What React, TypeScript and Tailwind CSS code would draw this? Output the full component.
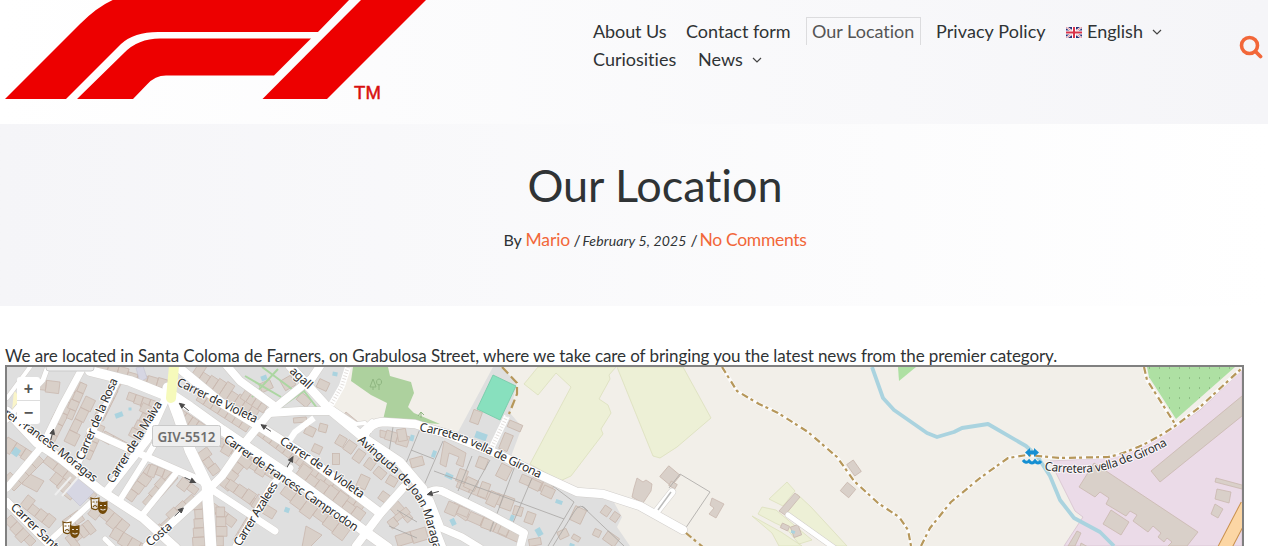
import React from "react";

type Pt = [number, number];

const ROADS: [string, number][] = [
  ["M7 411 L37 443 L60 458 L100 490 L143 518 L176 548", 9],
  ["M90 371 L130 381 L170 397", 10],
  ["M82 369 L62 406 L43 445 L7 488", 7],
  ["M47 369 L43 380 L22 402 L7 420", 5],
  ["M30 367 L7 398", 4],
  ["M118 380 L96 425 L77 466", 6],
  ["M165 400 L147 440 L107 491", 8],
  ["M90 431 L147 457 L204 482", 7],
  ["M157 440 L147 457 L120 500", 6],
  ["M177 472 L143 514", 6],
  ["M168 388 L178 415 L190 450 L207 485 L211 548", 11],
  ["M172 395 L190 407 L222 430 L290 476 L367 533 L388 548", 10],
  ["M178 367 L220 402 L257 425 L300 452 L380 513", 9],
  ["M320 366 L312 378 L271 411 L247 440 L222 476 L208 490 L147 546", 8],
  ["M227 366 L240 381 L273 405", 8],
  ["M269 413 L300 411 L332 411", 8],
  ["M290 366 L330 410 L364 438 L400 462 L423 489 L431 520 L442 548", 9],
  ["M364 436 Q370 422 384 422 L415 424 L450 435 L500 455 L540 475 L577 492 L603 494 L640 506 L683 530", 8.5],
  ["M332 408 L356 424 L365 423", 4],
  ["M404 487 L380 514 L356 546", 8],
  ["M426 494 Q436 487 446 493 L487 513 L524 533 L520 548", 8],
  ["M430 500 L441 528 L462 537 L480 548", 7],
  ["M290 468 L273 484 L236 546", 7],
  ["M208 487 L275 531", 7],
  ["M7 502 L35 530 L52 547", 8],
  ["M91 503 L53 538", 6],
  ["M105 539 L115 549", 5],
  ["M370 431 L372 421 L360 432", 4],
  ["M657 511 L672 492", 7],
  ["M788 515 L840 552", 5],
];

const ROWS: [number, number, number, number, number, number][] = [
  [8, 437, 35, 454, 3, 14], [43, 462, 92, 501, 5, -10], [20, 377, 60, 382, 3, 15],
  [52, 447, 84, 384, 6, -13], [64, 441, 86, 396, 4, 12], [87, 385, 72, 420, 4, 9],
  [103, 421, 121, 384, 5, -10], [90, 460, 105, 427, 4, -14], [105, 431, 140, 450, 4, 10],
  [129, 392, 158, 402, 4, 10], [154, 408, 138, 440, 4, 12], [97, 369, 166, 389, 7, -9],
  [118, 391, 103, 421, 4, 8], [125, 497, 149, 464, 4, 11], [151, 464, 172, 472, 3, 12],
  [150, 509, 178, 478, 4, -13], [183, 477, 199, 489, 2, 11], [181, 409, 205, 425, 4, 13],
  [190, 377, 254, 419, 9, -17], [196, 400, 246, 432, 7, -13], [197, 454, 213, 476, 3, -12],
  [213, 434, 239, 447, 4, 9], [226, 442, 277, 473, 6, 11], [240, 398, 263, 413, 4, -12],
  [256, 434, 302, 468, 7, -12], [304, 461, 365, 505, 8, 12], [296, 474, 360, 521, 7, -13],
  [287, 484, 350, 530, 6, 15], [243, 454, 219, 484, 4, -13], [225, 487, 258, 510, 4, -12],
  [211, 501, 237, 520, 3, 12], [216, 507, 216, 546, 4, -11], [202, 500, 205, 546, 5, 12],
  [198, 501, 158, 538, 5, 12], [14, 491, 44, 461, 4, -16], [56, 472, 86, 496, 4, 13],
  [20, 505, 49, 528, 4, -13], [11, 515, 36, 541, 4, 12], [99, 500, 130, 525, 4, 18],
  [115, 527, 150, 548, 4, 14], [65, 538, 88, 520, 4, 15], [78, 510, 62, 521, 2, -15],
  [251, 506, 272, 519, 2, -14], [247, 517, 233, 540, 3, -9], [346, 412, 358, 422, 1, 7],
  [387, 430, 410, 437, 2, 12], [456, 487, 506, 508, 4, -12],
  [467, 520, 519, 543, 4, -12], [449, 501, 470, 510, 2, 12], [519, 482, 550, 495, 3, -11],
  [397, 500, 413, 518, 2, 11], [395, 536, 425, 527, 2, 14], [387, 522, 406, 507, 3, 9],
];

function parcels([x1, y1, x2, y2, n, depth]: [number, number, number, number, number, number], k: number): string {
  const dx = (x2 - x1) / n;
  const dy = (y2 - y1) / n;
  const len = Math.hypot(dx, dy);
  const nx = -dy / len;
  const ny = dx / len;
  let d = "";
  for (let i = 0; i < n; i++) {
    const h = depth * (1 - ((i * 3 + k * 2) % 4) * 0.11);
    const a: Pt = [x1 + dx * i, y1 + dy * i];
    const b: Pt = [a[0] + dx, a[1] + dy];
    d += `M${a[0]} ${a[1]}L${b[0]} ${b[1]}L${b[0] + nx * h} ${b[1] + ny * h}L${a[0] + nx * h} ${a[1] + ny * h}Z`;
  }
  return d;
}

// x, y, width, height, rotation of free-standing houses
const HOUSES: [number, number, number, number, number][] = [
  [323, 385, 11, 9, 25], [304, 400, 13, 9, 40], [288, 383, 12, 11, -30], [266, 386, 12, 9, -25],
  [310, 431, 10, 9, 25], [323, 428, 8, 8, 15], [300, 420, 13, 5, -5], [341, 441, 9, 10, 30],
  [317, 449, 9, 8, 25], [336, 459, 7, 11, 0], [350, 447, 10, 11, 35], [359, 456, 9, 12, 35],
  [370, 464, 9, 10, 35], [380, 473, 11, 9, 40], [392, 481, 10, 9, 30], [363, 482, 10, 13, 25],
  [384, 497, 9, 9, 35], [402, 435, 9, 12, -10], [417, 462, 13, 9, -15], [476, 417, 9, 13, 20],
  [515, 426, 14, 7, 23], [506, 442, 9, 17, 22], [504, 472, 12, 14, 27], [482, 463, 10, 11, 20],
  [462, 476, 9, 13, 20], [471, 484, 12, 11, 25], [484, 490, 9, 15, 20], [493, 499, 10, 14, 25],
  [507, 503, 12, 13, 20], [518, 511, 9, 9, 15], [530, 518, 9, 11, 20], [578, 515, 12, 15, 25],
  [535, 485, 11, 9, 25], [548, 492, 12, 10, 25],
  [606, 511, 8, 9, 35], [615, 517, 7, 9, 35], [597, 533, 7, 7, 25], [611, 539, 14, 10, 35],
  [563, 534, 10, 8, -25], [576, 538, 8, 5, 30], [670, 476, 15, 14, 40], [673, 485, 7, 5, 30],
  [854, 468, 8, 14, -35], [848, 490, 11, 11, 40], [785, 527, 8, 5, 25], [796, 531, 8, 11, -20],
  [535, 542, 12, 7, -10], [504, 530, 9, 10, 25], [487, 524, 10, 10, 20],
];

const POOLS: [number, number, number, number, number][] = [
  [119, 415, 8, 5, -20], [130, 409, 3, 3, 0], [16, 452, 7, 8, 35], [264, 378, 6, 5, -20],
  [335, 374, 5, 4, 10], [287, 510, 5, 5, 20], [412, 438, 4, 6, 15], [434, 454, 4, 7, 20],
  [449, 476, 8, 5, 25], [481, 436, 12, 7, 20], [453, 522, 5, 7, -25], [512, 518, 4, 6, 20],
  [539, 532, 6, 8, -30], [559, 502, 7, 4, 20], [572, 545, 5, 3, 20], [793, 532, 4, 3, 20],
];

const ARROWS: [number, number, number][] = [
  [52, 435, -76], [184, 407, 218], [190, 480, 25], [179, 512, -43],
  [266, 428, 214], [290, 462, -60], [433, 493, 165],
];

const LABELS: [string, string, number][] = [
  ["r1", "rer Francesc Moragas", 113], ["r2", "Carrer de la Rosa", 88], ["r3", "Carrer de la Malva", 94],
  ["r4", "Carrer de Violeta", 88], ["r5", "Carrer de la Violeta", 99], ["r6", "Carrer de Francesc Camprodon", 160],
  ["r7", "Carrer Azalees", 73], ["r8", "Avinguda de Joan Maragall", 143], ["r9", "Carretera vella de Girona", 130],
  ["r10", "Carretera vella de Girona", 129], ["r11", "Costa", 30], ["r12", "Carrer Sant", 61], ["r13", "agall", 26],
];

function rects(items: [number, number, number, number, number][]) {
  return items.map(([x, y, w, h, a], i) => (
    <rect key={i} x={x - w / 2} y={y - h / 2} width={w} height={h} transform={`rotate(${a} ${x} ${y})`} />
  ));
}

function Masks({ x, y }: { x: number; y: number }) {
  return (
    <g transform={`translate(${x} ${y})`}>
      <path d="M1 1 Q4 2.5 9 1 L8 11.500 Q5 14 1.5 11 Z" fill="#fff" fillOpacity=".3" stroke="#734a08" strokeWidth="1.1" />
      <path d="M2.5 5 h2 M6 5 h1.500 M3 10 Q5 7 7 10" stroke="#734a08" strokeWidth="1.1" fill="none" />
      <path d="M8 4 Q12 6 17.5 4 L17.5 12 Q16 17 12.5 17 Q8 16 8 11 Z" fill="#734a08" />
      <path d="M10 8.500 h2 M14 8.500 h2 M10.500 12 Q13 14 15.500 12" stroke="#e5dcd2" strokeWidth="1.2" fill="none" />
    </g>
  );
}

function StreetMap() {
  return (
    <svg className="block h-full w-full" viewBox="7 367 1235 179" preserveAspectRatio="none">
      <defs>
        <pattern id="dots" width="10" height="10" x="1144" y="363" patternUnits="userSpaceOnUse">
          <rect width="10" height="10" fill="#aee0a3" />
          <path d="M5 5 h1" stroke="#6c9c67" strokeWidth="1.2" />
        </pattern>
        <path id="r1" d="M3 415 L28 432 L55 452 L100 488" />
        <path id="r2" d="M83 461 L100 422 L121 373" />
        <path id="r3" d="M113 484 L137 446 L165 400" />
        <path id="r4" d="M176 385 L207 400 L259 425" />
        <path id="r5" d="M279 443 L310 463 L366 502" />
        <path id="r6" d="M223 441 L260 467 L361 536" />
        <path id="r7" d="M240 547 L258 518 L281 480" />
        <path id="r8" d="M357 441 L385 466 Q414 489 424 514 L437 560" />
        <path id="r9" d="M419 431 Q455 437 480 450 L545 481" />
        <path id="r10" d="M1044 470 Q1095 478 1125 463 Q1148 457 1173 442" />
        <path id="r11" d="M150 547 L176 525" />
        <path id="r12" d="M10 508 L56 553" />
        <path id="r13" d="M289 372 L312 393" />
      </defs>
      <rect x="7" y="367" width="1235" height="179" fill="#f2efe9" />
      <path d="M7 367 H350 L330 406 L360 425 L420 421 L458 432 L493 367 H500 L517 382 L510 413 L522 427 L510 459 L577 490 L610 495 L622 517 L617 527 L630 546 H7 Z" fill="#dfdfdf" />
      <path d="M353 367 H388 L390 376 L411 382 L414 393 L408 407 L414 413 L440 424 L383 420 L387 403 L371 395 L351 381 Z" fill="#add19e" />
      <path d="M493 375 L516 386 L500 420 L477 409 Z" fill="#88e0be" stroke="#70c9a6" strokeWidth=".8" />
      <g fill="#edf0d6" stroke="#dce0bd" strokeWidth=".8">
        <path d="M538 367 L524 384 L538 395 L556 373 L571 387 L530 464 L560 481 L571 476 L603 434 L601 429 L611 413 L608 405 L599 399 L610 379 L609 375 L616 367 Z" />
        <path d="M617 367 H683 L711 418 L677 447 L660 458 L653 456 Z" />
        <path d="M787 482 L769 499 L783 506 L795 491 Z M797 494 L811 507 L847 546 L835 546 L787 512 Z" />
        <path d="M762 507 L758 514 L775 523 L786 528 L799 544 L812 540 L776 510 Z M752 516 L772 533 L779 546 H802 L781 532 Z" />
      </g>
      <path d="M898 367 H916 L899 381 Z" fill="#aee0a3" />
      <path d="M1147 367 H1235 L1176 419 L1149 377 Z" fill="url(#dots)" />
      <path d="M1242 370 L1200 410 Q1150 446 1108 458 L1050 461 L1075 511 L1083 517 L1064 546 H1242 Z" fill="#ebdbe8" stroke="#d6c2ce" strokeWidth=".8" />
      <g fill="#d9d0c9" stroke="#c9b8ae" strokeWidth=".8">
        <path d="M1094 463 L1198 532 L1187 546 H1168 L1172 542 L1167 538 L1164 542 L1158 537 L1161 533 L1153 526 L1148 532 L1133 521 L1137 515 L1130 511 L1126 516 L1106 504 L1109 498 L1100 492 L1095 497 L1079 487 Z" />
        <path d="M1111 510 L1129 522 L1121 535 L1103 524 Z M1151 471 L1242 396 V416 L1160 482 Z M1216 478 L1242 485 V489 L1215 482 Z M1217 489 L1231 492 L1229 503 L1215 499 Z M1215 504 L1223 509 L1218 518 L1211 514 Z M1077 531 L1081 533 L1075 546 H1068 Z M1081 543 L1088 547 H1080 Z" />
        <path d="M637 478 L643 482 L646 480 L652 484 L651 491 L643 503 L632 497 L634 488 Z M712 498 L724 504 L716 518 L709 514 L714 508 L710 505 Z M795 493 L800 497 L785 515 L779 511 Z" />
        <path d="M444 441 L466 453 L463 467 L456 464 L459 457 L449 453 L446 467 L440 464 Z M455 501 L463 505 L460 510 L470 515 L466 521 L453 512 Z M380 430 L392 433 L387 439 L380 437 Z" />
        <path d="M28 473 L44 481 L37 492 L22 484 Z M306 526 L322 535 L310 547 H302 Z" />
        {ROWS.map((r, i) => <path key={i} d={parcels(r, i)} />)}
        {rects(HOUSES)}
      </g>
      <path d="M79 477 L94 492 L80 506 L65 491 Z M143 366 L147 378 L140 382 L136 368 Z" fill="#d6d6e3" stroke="#c2c2d2" strokeWidth=".6" />
      <path d="M14 390 L24 403 L18 412 L12 411 Z" fill="#faf5c9" />
      <g fill="#aad3df">{rects(POOLS)}</g>
      <g fill="none" stroke="#acd6a2" strokeWidth="2">
        <path d="M245 376 L281 397 M252 397 L278 369 M262 367 L296 392 M278 409 L304 391 L317 408 Z" />
      </g>
      <g fill="none" stroke="#a8a6a3" strokeWidth=".8">
        <path d="M393 427 L389 452 M420 429 L402 473 M411 450 L434 459 M443 441 L422 490 M434 471 L564 519 M472 456 L458 491 M490 460 L467 501 M515 466 L490 532 M532 478 L510 530 M545 480 L574 502 L548 546 M582 506 L624 546 M553 546 L574 512 Q580 501 588 511 M397 510 L417 522 M389 526 L417 538" />
        <path d="M669 488 L680 474 L710 492 L685 529" />
      </g>
      <path d="M872 367 L883 398 L894 410 L927 433 L937 437 L954 432 L962 428 L988 424 L1026 446 L1037 456 L1050 476 L1060 500 L1074 518 L1100 532 L1114 546" fill="none" stroke="#aad3df" strokeWidth="3.8" strokeLinejoin="round" />
      <g fill="none" stroke="#d2cfcc" strokeLinejoin="round" strokeLinecap="round">
        {ROADS.map(([d, w], i) => <path key={i} d={d} strokeWidth={w + 1} />)}
      </g>
      <g fill="none" stroke="#fff" strokeLinejoin="round" strokeLinecap="round">
        {ROADS.map(([d, w], i) => <path key={i} d={d} strokeWidth={w} />)}
      </g>
      <path d="M658 510 L671 492" stroke="#bbb" strokeWidth="1.5" />
      <path d="M348 367 L342 386 L331 405 M314 418 L295 432 L289 441 M507 416 L491 449" fill="none" stroke="#fff" strokeWidth="6" />
      <path d="M348 367 L342 386 L331 405 M507 416 L491 449" fill="none" stroke="#e4e0de" strokeWidth="4" strokeDasharray="1 2" />
      <path d="M62 496 L80 475 M55 495 L71 477" stroke="#eee" strokeWidth="2" />
      <path d="M174 366 L171 398" stroke="#f6fabb" strokeWidth="10" strokeLinecap="round" />
      <path d="M1223 551 L1247 505" stroke="#c98f4b" strokeWidth="14" />
      <path d="M1223 551 L1247 505" stroke="#fcd6a4" strokeWidth="12" />
      <g fill="none" strokeLinejoin="round">
        <g stroke="#fff" strokeOpacity=".75" strokeWidth="3.6">
          <path d="M722 367 L737 391 L759 404 L778 413 L808 432 L837 457 L854 481 L878 503 L899 517 L908 530 L911 546" />
          <path d="M921 546 L930 528 L951 502 L980 478 L1008 458 L1027 455 L1060 458 L1108 457 Q1140 450 1175 426 L1200 407 L1242 368 M1144 367 L1147 380 L1175 424" />
        </g>
        <g stroke="#b6975a" strokeWidth="2.2" strokeDasharray="7 3 3 4">
          <path d="M722 367 L737 391 L759 404 L778 413 L808 432 L837 457 L854 481 L878 503 L899 517 L908 530 L911 546" />
          <path d="M921 546 L930 528 L951 502 L980 478 L1008 458 L1027 455 L1060 458 L1108 457 Q1140 450 1175 426 L1200 407 L1242 368" />
          <path d="M1144 367 L1147 380 L1175 424 M686 533 L704 548" />
          <path d="M502 367 L517 383 L517 394 L509 414" strokeDasharray="9 4" />
        </g>
      </g>
      <g fill="#168fd2">
        <path d="M1025 452.5 L1030 448 V450.5 H1034 V448 L1039 452.5 L1034 457 V454.5 H1030 V457 Z" />
        <path d="M1023 460 q3 4 6 1 q3 4 6 0 q3 4 6 0" fill="none" stroke="#168fd2" strokeWidth="3" />
      </g>
      <g fill="none" stroke="#8fb681" strokeWidth="1">
        <path d="M373 390 V387 M373 379 L370 387 H376 Z M379 390 V384 M379 385 a2.500 3 0 1 1 .1 0 M421 418 V412 L418 416 M424 415 L421 412" />
      </g>
      <g fill="#4b4a4a" stroke="#4b4a4a">
        {ARROWS.map(([x, y, a], i) => (
          <path key={i} d="M-6 0 H1 V-2.3 L6 0 L1 2.3 V0" strokeWidth=".9" transform={`translate(${x} ${y}) rotate(${a})`} />
        ))}
      </g>
      <Masks x={90} y={497} />
      <Masks x={62} y={521} />
      <g className="font-['Noto_Sans',sans-serif] text-[12px]" fill="#2c2c2c" stroke="#fff" strokeOpacity=".75" strokeWidth="2.2" strokeLinejoin="round" paintOrder="stroke">
        {LABELS.map(([id, text, length]) => (
          <text key={id} textLength={length} lengthAdjust="spacing">
            <textPath href={`#${id}`} textLength={length} lengthAdjust="spacing">{text}</textPath>
          </text>
        ))}
      </g>
      <rect x="46" y="360" width="48" height="11" rx="3" fill="#eee" stroke="#ccc" />
      <rect x="152.500" y="425.500" width="68" height="21" rx="2" fill="#efefef" stroke="#c9c9c9" />
      <text x="157.500" y="442" textLength="58" lengthAdjust="spacingAndGlyphs" className="font-['Noto_Sans',sans-serif] text-[14px] font-semibold" fill="#6e6e6e">GIV-5512</text>
    </svg>
  );
}

function Logo() {
  return (
    <svg className="block h-[124px] w-[440px] shrink-0" viewBox="0 0 440 124">
      <g fill="#ed0000">
        <path d="M5 99 L80 24 Q98 6 115 -1 H350 L318 32 H158 Q134 32 121 44 L66 99 Z" />
        <path d="M77 99 L124 53 Q138 38.500 160 38.500 H311 L274 75.500 H166 Q155 75.500 147 84.500 L133 99 Z" />
        <path d="M262.500 99 L362 -1 H427 L327 99 Z" />
      </g>
      <text x="354" y="99" textLength="27" className="font-['Liberation_Sans',sans-serif] text-[18.500px]" fill="#d80f0f" stroke="#d80f0f" strokeWidth=".5">TM</text>
    </svg>
  );
}

function Chevron() {
  return (
    <svg className="ml-[9px] mt-px h-[6px] w-[10px]" viewBox="0 0 10 6" fill="none" stroke="#444" strokeWidth="1.2">
      <path d="M1 1 L5 5 L9 1" />
    </svg>
  );
}

function Flag() {
  return (
    <svg className="mr-[5px] mt-[2px] h-[11px] w-4" viewBox="0 0 16 11">
      <rect width="16" height="11" fill="#29337a" />
      <path d="M0 0 L16 11 M16 0 L0 11" stroke="#fff" strokeWidth="2.2" />
      <path d="M0 0 L16 11 M16 0 L0 11" stroke="#d8596a" strokeWidth=".7" />
      <path d="M8 0 V11 M0 5.500 H16" stroke="#fff" strokeWidth="4" />
      <path d="M8 0 V11 M0 5.500 H16" stroke="#d8334a" strokeWidth="2" />
    </svg>
  );
}

function SearchIcon() {
  return (
    <svg className="mr-[5px] mt-[35px] size-6 shrink-0" viewBox="0 0 24 24" fill="none" stroke="#f26739" strokeLinecap="round">
      <circle cx="10.500" cy="10.500" r="8" strokeWidth="3.600" />
      <path d="M16.500 16.500 L21.500 21.500" strokeWidth="3.800" />
    </svg>
  );
}

export default function App() {
  return (
    <div className="h-[546px] w-[1268px] overflow-hidden bg-white font-[Lato,sans-serif] text-[#2f3335] [font-variant-ligatures:none]">
      <header className="flex h-[124px] justify-between bg-linear-to-r from-white to-[#f5f5f8]">
        <Logo />
        <nav className="ml-[153px] mt-[17px] grow text-[18px] leading-[28px]">
          <div className="flex h-7 items-center whitespace-nowrap">
            <a className="w-[93px] tracking-[-0.1px]">About Us</a>
            <a className="w-[120px]">Contact form</a>
            <a className="h-7 w-[115px] border border-b-0 border-[#dcdcde] pl-[5px] leading-[26px] text-[#555]">Our Location</a>
            <a className="ml-[15px] w-[130px] tracking-[0.08px]">Privacy Policy</a>
            <a className="flex items-center"><Flag />English<Chevron /></a>
          </div>
          <div className="flex h-7 items-center">
            <a className="w-[105px]">Curiosities</a>
            <a className="flex items-center">News<Chevron /></a>
          </div>
        </nav>
        <SearchIcon />
      </header>
      <section className="flex h-[182px] flex-col items-center bg-linear-to-r from-[#f5f5f8] to-white pl-[42px]">
        <h1 className="mt-[34px] text-[45px] leading-[54px] tracking-[-0.05px]">Our Location</h1>
        <p className="mt-[14px] flex items-baseline whitespace-nowrap text-[16px] leading-[28px]">
          <span className="w-[22px]">By</span>
          <a className="w-[48px] text-[17.500px] tracking-[-0.1px] text-[#f26739]">Mario</a>
          <span className="w-[9px]">/</span>
          <i className="w-[108px] text-[14px] tracking-[0.15px]">February 5, 2025</i>
          <span className="w-[9px]">/</span>
          <a className="text-[17.500px] tracking-[-0.3px] text-[#f26739]">No Comments</a>
        </p>
      </section>
      <main className="pl-[5px] pt-[37px]">
        <p className="h-[22px] whitespace-nowrap text-[17px] leading-[25px] tracking-[-0.085px]">
          We are located in Santa Coloma de Farners, on Grabulosa Street, where we take care of bringing you the latest news from the premier category.
        </p>
        <div className="relative h-[181px] w-[1239px] border-2 border-b-0 border-[#808080]">
          <StreetMap />
          <div className="absolute left-[10px] top-[10px] w-[23px] overflow-hidden rounded-[3px] bg-white text-center font-['Liberation_Sans',sans-serif] text-[16px] font-bold leading-[23px] text-[#555]">
            <div className="h-6 border-b border-[#ddd]">+</div>
            <div className="h-[23px]">−</div>
          </div>
        </div>
      </main>
    </div>
  );
}
